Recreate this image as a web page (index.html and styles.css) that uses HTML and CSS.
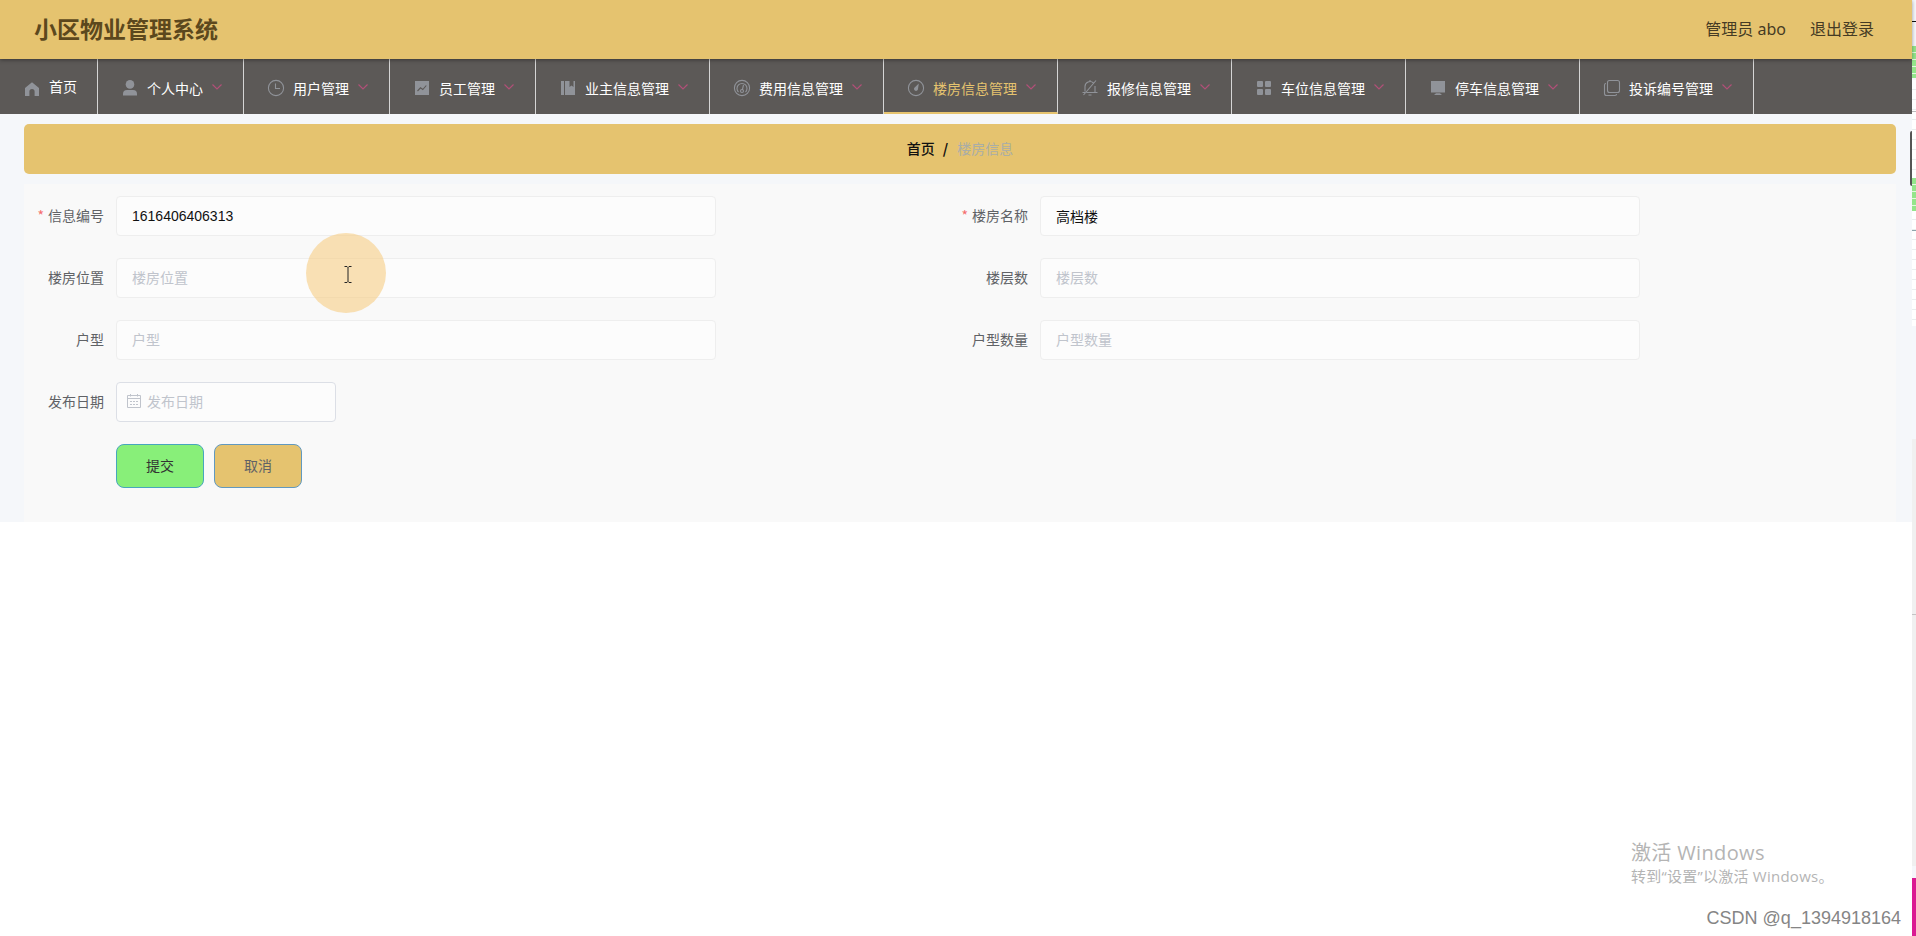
FILE: index.html
```
<!DOCTYPE html>
<html lang="zh-CN">
<head>
<meta charset="utf-8">
<title>小区物业管理系统</title>
<link rel="stylesheet" href="styles.css">
</head>
<body>
<div class="screen">
  <div class="app">
    <header class="header">
      <h1 class="title">小区物业管理系统</h1>
      <div class="user"><span>管理员 abo</span><span>退出登录</span></div>
    </header>
    <nav class="nav">
      <a class="item home"><svg class="icon" viewBox="0 0 18 18"><path class="fill" d="M9 2.3 16 8v8h-4.4v-4.500a2.600 2.600 0 0 0-5.200 0V16H2V8z"/></svg><span>首页</span></a>
      <a class="item"><svg class="icon" viewBox="0 0 18 18"><circle class="fill" cx="9" cy="5.400" r="4.300"/><path class="fill" d="M2 16.500v-1.500q0-4 4-4h6q4 0 4 4v1.500z"/></svg><span>个人中心</span><svg class="arrow" viewBox="0 0 12 12"><path d="m1.500 3.500 4.500 4.500 4.500-4.500"/></svg></a>
      <a class="item"><svg class="icon" viewBox="0 0 18 18"><circle cx="9" cy="9" r="7.600"/><path d="M8.500 4.500V9.500h4.500"/></svg><span>用户管理</span><svg class="arrow" viewBox="0 0 12 12"><path d="m1.500 3.500 4.500 4.500 4.500-4.500"/></svg></a>
      <a class="item"><svg class="icon" viewBox="0 0 18 18"><path class="fill" d="M2 2h14v14H2z"/><path class="cut" d="m4.500 12 3-3.200 2.300 1.700 3.500-4"/></svg><span>员工管理</span><svg class="arrow" viewBox="0 0 12 12"><path d="m1.500 3.500 4.500 4.500 4.500-4.500"/></svg></a>
      <a class="item"><svg class="icon" viewBox="0 0 18 18"><path class="fill" d="M2 2h3v14H2zM6 2h4.500v6l2-1.500 2 1.500V2H16v14H6z"/></svg><span>业主信息管理</span><svg class="arrow" viewBox="0 0 12 12"><path d="m1.500 3.500 4.500 4.500 4.500-4.500"/></svg></a>
      <a class="item"><svg class="icon" viewBox="0 0 18 18"><circle cx="9" cy="9" r="7.600"/><path d="M5.500 13A5 5 0 1 1 12.500 13M9.300 11l1.200-5"/><circle cx="9" cy="12" r="1.500"/></svg><span>费用信息管理</span><svg class="arrow" viewBox="0 0 12 12"><path d="m1.500 3.500 4.500 4.500 4.500-4.500"/></svg></a>
      <a class="item active"><svg class="icon" viewBox="0 0 18 18"><circle cx="9" cy="9" r="7.600"/><path class="fill" d="m11.800 4.500-.800 5.500a2 2 0 1 1-3.600-1.300z"/></svg><span>楼房信息管理</span><svg class="arrow" viewBox="0 0 12 12"><path d="m1.500 3.500 4.500 4.500 4.500-4.500"/></svg></a>
      <a class="item"><svg class="icon" viewBox="0 0 18 18"><path d="M2.500 16 15 1.500M4 12.500V7.500a5 5 0 0 1 8.500-3.500M14 7v6.500M5.500 13.500H16.500M7.500 16h3M9 1v1.500M1.500 13.500H4"/></svg><span>报修信息管理</span><svg class="arrow" viewBox="0 0 12 12"><path d="m1.500 3.500 4.500 4.500 4.500-4.500"/></svg></a>
      <a class="item"><svg class="icon" viewBox="0 0 18 18"><g class="fill"><rect x="2" y="2" width="6" height="6" rx="1"/><rect x="10" y="2" width="6" height="6" rx="1"/><rect x="2" y="10" width="6" height="6" rx="1"/><rect x="10" y="10" width="6" height="6" rx="1"/></g></svg><span>车位信息管理</span><svg class="arrow" viewBox="0 0 12 12"><path d="m1.500 3.500 4.500 4.500 4.500-4.500"/></svg></a>
      <a class="item"><svg class="icon" viewBox="0 0 18 18"><path class="fill" d="M2 2h14v11.500H2zM7 14.300h4l2 1.700H5z"/></svg><span>停车信息管理</span><svg class="arrow" viewBox="0 0 12 12"><path d="m1.500 3.500 4.500 4.500 4.500-4.500"/></svg></a>
      <a class="item"><svg class="icon" viewBox="0 0 18 18"><rect x="4.500" y="1.500" width="12" height="12" rx="2"/><path d="M3 4.500q-1.500 0-1.500 1.500v8.500q0 2 2 2H12q1.500 0 1.500-1.500"/></svg><span>投诉编号管理</span><svg class="arrow" viewBox="0 0 12 12"><path d="m1.500 3.500 4.500 4.500 4.500-4.500"/></svg></a>
    </nav>
    <main class="main">
      <div class="crumbs"><b>首页</b><b class="slash">/</b><span>楼房信息</span></div>
      <form class="form">
        <div class="field"><label class="required">信息编号</label><div class="input value number">1616406406313</div></div>
        <div class="field"><label class="required">楼房名称</label><div class="input value">高档楼</div></div>
        <div class="field"><label>楼房位置</label><div class="input">楼房位置</div></div>
        <div class="field"><label>楼层数</label><div class="input">楼层数</div></div>
        <div class="field"><label>户型</label><div class="input">户型</div></div>
        <div class="field"><label>户型数量</label><div class="input">户型数量</div></div>
        <div class="field wide"><label>发布日期</label><div class="input date"><svg class="calendar" viewBox="0 0 14 14"><path d="M.5 1.500h13v12H.5zM.5 4.500h13M3.500 0v2.500M10.500 0v2.500M3 7.500h2M6 7.500h2M9 7.500h2M3 10.500h2M6 10.500h2M9 10.500h2"/></svg>发布日期</div></div>
        <div class="actions"><button type="button" class="btn submit">提交</button><button type="button" class="btn cancel">取消</button></div>
      </form>
    </main>
  </div>
  <aside class="edge"></aside>
  <i class="handle"></i>
  <div class="pointer"><svg viewBox="0 0 8 17"><path d="M.5.5h2.500l1 1 1-1h2.500M4 1.500v14M.5 16.500h2.500l1-1 1 1h2.500"/></svg></div>
  <div class="activate"><p class="big">激活 Windows</p><p class="small">转到“设置”以激活 Windows。</p></div>
  <div class="credit">CSDN @q_1394918164</div>
</div>
</body>
</html>
```
FILE: styles.css
```
* { box-sizing: border-box; }
body { margin: 0; background: #fff; font: 14px "Noto Sans", "Noto Sans CJK SC", sans-serif; }
.screen { position: relative; display: flex; width: 1916px; height: 936px; overflow: hidden; }
.app { width: 1912px; }
.header { position: relative; z-index: 1; display: flex; justify-content: space-between; align-items: center; height: 59px; padding: 0 38px 3px 34px; background: #e5c36f; box-shadow: 0 1px 4px rgba(0,0,0,.4); color: #5c481d; }
.title { margin: 0; font: bold 23px "Noto Sans CJK SC", sans-serif; }
.user { display: flex; gap: 24px; font: 16px "Noto Sans", "Noto Sans CJK SC", sans-serif; color: #453b24; }
.nav { display: flex; height: 55px; background: #5c5957; }
.item { display: flex; align-items: center; width: 174px; padding: 4px 0 0 23px; border-right: 1px solid #d5d5d5; color: #fff; font: 14px "Noto Sans CJK SC", sans-serif; white-space: nowrap; }
.item:nth-child(-n+4) { width: 146px; }
.item.home { width: 98px; }
.item span { margin-top: -2px; }
.item.home span { margin-top: -6px; }
.item.active { border-bottom: 2px solid #e5c36f; padding-top: 6px; color: #e5c36f; }
.icon { width: 18px; height: 18px; margin: -1px 8px 0 0; fill: none; stroke: #909399; stroke-width: 1.1; }
.home .icon { margin-top: 0; }
.icon .fill { fill: #909399; stroke: none; }
.icon .cut { stroke: #5c5957; }
.arrow { width: 12px; height: 12px; margin: -4px 0 0 8px; fill: none; stroke: #b15078; stroke-width: 1.2; }
.main { height: 408px; padding: 10px 16px 0 24px; background: #f5f7fa; }
.crumbs { display: flex; justify-content: center; align-items: center; height: 50px; padding-bottom: 2px; border-radius: 5px; background: #e5c36f; color: #111; font: 14px "Noto Sans CJK SC", sans-serif; }
.crumbs b { font-weight: 500; }
.crumbs .slash { margin: 0 9px 0 8px; font-weight: 700; }
.crumbs span { color: #a9ada7; }
.form { display: grid; grid-template-columns: 924px 924px; grid-auto-rows: 40px; row-gap: 22px; align-content: start; height: 338px; margin-top: 10px; padding: 12px; background: #f9f9f9; }
.field { display: flex; }
.field.wide { grid-column: 1 / 3; }
.field label { width: 80px; padding-right: 12px; text-align: right; font: 14px/38px "Noto Sans CJK SC", sans-serif; color: #606266; white-space: nowrap; }
.required::before { content: "*"; margin-right: 4px; color: #f56c6c; }
.input { display: flex; align-items: center; width: 600px; height: 40px; padding: 0 15px 2px; border: 1px solid #eee; border-radius: 4px; background: #fcfcfc; color: #c0c4cc; font: 14px "Noto Sans CJK SC", sans-serif; }
.input.value { padding-bottom: 0; color: #111; }
.input.number { font-family: "Liberation Sans", Arial, sans-serif; }
.input.date { width: 220px; padding-left: 10px; border-color: #dcdfe6; }
.calendar { width: 14px; height: 14px; margin-right: 6px; fill: none; stroke: #c0c4cc; }
.actions { grid-column: 1 / 3; display: flex; gap: 10px; padding-left: 80px; }
.btn { width: 88px; height: 44px; padding: 0 0 2px; border: 1px solid; border-radius: 8px; font: 14px "Noto Sans CJK SC", sans-serif; }
.submit { border-color: #48a6bd; background: #88ef79; color: #333; }
.cancel { border-color: #6299bf; background: #e5c36f; color: #606266; }
.edge { width: 4px; background:
  linear-gradient(#da1a92, #da1a92) 0 878px / 4px 58px no-repeat,
  linear-gradient(#111, #111) 0 21px / 4px 1px no-repeat,
  repeating-linear-gradient(#94e58b 0 6px, #e4f8e1 6px 7px) 0 46px / 4px 32px no-repeat,
  repeating-linear-gradient(#94e58b 0 6px, #e4f8e1 6px 7px) 0 178px / 4px 33px no-repeat,
  linear-gradient(#8ea5ab, #8ea5ab) 0 230px / 4px 1px no-repeat,
  linear-gradient(#bbb, #bbb) 0 111px / 4px 1px no-repeat,
  linear-gradient(#c4c4c4, #c4c4c4) 0 614px / 4px 1px no-repeat,
  repeating-linear-gradient(#fff 0 9px, #e9eeee 9px 10px) 0 80px / 4px 246px no-repeat,
  linear-gradient(#f0f0f0, #f0f0f0) 0 439px / 4px 427px no-repeat,
  #f5f7fb; }
.handle { position: absolute; left: 1910px; top: 131px; width: 2px; height: 55px; border-radius: 2px 0 0 2px; background: #555; }
.pointer { position: absolute; left: 306px; top: 233px; width: 80px; height: 80px; border-radius: 50%; background: rgba(246,205,132,.6); }
.pointer svg { position: absolute; left: 38px; top: 33px; width: 8px; height: 17px; fill: none; stroke: #222; }
.activate { position: absolute; left: 1631px; top: 840px; color: #b4b4b4; white-space: nowrap; font-family: "Open Sans", "Noto Sans CJK SC", sans-serif; }
.activate p { margin: 0; }
.big { font-size: 20px; line-height: 26px; letter-spacing: .35px; }
.small { font-size: 15px; line-height: 20px; letter-spacing: .25px; }
.credit { position: absolute; right: 15px; top: 907px; color: #858585; font: 18px/22px "Liberation Sans", Arial, sans-serif; }
```
